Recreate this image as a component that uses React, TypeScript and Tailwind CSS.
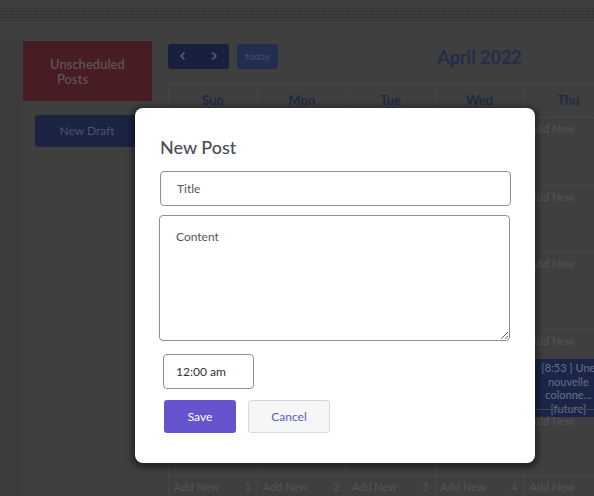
import React from "react";

const days = ["Sun", "Mon", "Tue", "Wed", "Thu", "Fri", "Sat"];
const rowHeights = [68, 67, 77, 80, 66, 60];
const bottomNums = ["1", "2", "3", "4", "5", "6", "7"];

function Cell({ num, children }: { num?: string; children?: React.ReactNode }) {
  return (
    <div className="border-r border-t border-[#464646] px-[5px] pt-[4px] h-full">
      <div className="flex justify-between text-[11px] leading-[14px] text-[#52555b]">
        <span>Add New</span>
        <span className="pr-[1px]">{num}</span>
      </div>
      {children}
    </div>
  );
}

export default function App() {
  return (
    <div
      className="relative w-[594px] h-[496px] overflow-hidden bg-[#3f3f3f]"
      style={{ fontFamily: "Lato, 'Noto Sans', sans-serif" }}
    >
      {/* top dotted band */}
      <div className="h-[7px]" />
      <div className="h-[14px] bg-[radial-gradient(#363636_1px,transparent_1.2px)] bg-[length:3px_3px]" />
      <div className="h-[20px]" />

      <div className="flex">
        {/* sidebar */}
        <div className="w-[23px] shrink-0 h-[460px] bg-[#3c3c3c]" />
        <div className="w-[129px] shrink-0">
          <div className="h-[60px] bg-[#481c23] pl-[27px] pt-[16px] text-[13px] leading-[15px] font-semibold text-[#5f5358]">
            <div>Unscheduled</div>
            <div className="pl-[7px]">Posts</div>
          </div>
          <div className="mt-[14px] ml-[12px] w-[104px] h-[32px] rounded-[3px] bg-[#1b2443] flex items-center justify-center text-[12px] text-[#4e5466]">
            New Draft
          </div>
        </div>

        {/* calendar */}
        <div className="ml-[16px] w-[623px] shrink-0">
          <div className="grid grid-cols-3 h-[25px] items-center">
            <div className="flex gap-[8px]">
              <div className="flex w-[61px] h-[25px] rounded-[3px] bg-[#17213d] text-[#5b6273]">
                <div className="flex-1 flex items-center justify-center">
                  <svg width="10" height="10" viewBox="0 0 10 10" fill="none" stroke="currentColor" strokeWidth="1.6">
                    <path d="M6.5 1.5 3 5l3.5 3.5" />
                  </svg>
                </div>
                <div className="flex-1 flex items-center justify-center">
                  <svg width="10" height="10" viewBox="0 0 10 10" fill="none" stroke="currentColor" strokeWidth="1.6">
                    <path d="M3.5 1.5 7 5 3.5 8.5" />
                  </svg>
                </div>
              </div>
              <div className="w-[41px] h-[25px] rounded-[3px] bg-[#222d52] flex items-center justify-center text-[10px] text-[#4b5168]">
                today
              </div>
            </div>
            <div className="text-center text-[18px] font-bold text-[#232c48] pt-[3px]">April 2022</div>
            <div />
          </div>

          <div className="mt-[17px] border-l border-[#464646]">
            <div className="grid grid-cols-7 h-[34px] border-b border-dotted border-[#474747]">
              {days.map((d) => (
                <div
                  key={d}
                  className="border-r border-t border-[#464646] flex items-center justify-center pt-[1px] text-[13px] font-bold text-[#1f2945]"
                >
                  {d}
                </div>
              ))}
            </div>
            {rowHeights.map((h, r) => (
              <div key={r} className="grid grid-cols-7" style={{ height: h }}>
                {days.map((d, c) => (
                  <Cell key={d} num={r === 5 ? bottomNums[c] : String(r * 7 + c + 3)}>
                    {r === 3 && c === 4 ? (
                      <div className="mt-[11px] mx-[-2px] bg-[#1b2548] py-[2px] text-center text-[11px] leading-[13.5px] text-[#6a7086]">
                        [8:53 ] Une
                        <br />
                        nouvelle
                        <br />
                        colonne...
                        <br />
                        [future]
                      </div>
                    ) : null}
                  </Cell>
                ))}
              </div>
            ))}
          </div>
        </div>
      </div>

      {/* modal */}
      <div className="absolute left-[135px] top-[108px] w-[400px] h-[355px] rounded-[8px] bg-white shadow-[0_2px_6px_3px_rgba(0,0,0,0.45)] pl-[25px] pt-[27px]">
        <h2 className="text-[18px] leading-[24px] font-medium text-[#4a4d55]">New Post</h2>
        <input
          className="mt-[12px] block w-[351px] h-[35px] rounded-[4px] border border-[#8c8f94] px-[16px] text-[12px] text-[#2c3338] placeholder:text-[#50575e] outline-none"
          placeholder="Title"
        />
        <textarea
          className="mt-[9px] -ml-px block w-[351px] h-[126px] rounded-[4px] border border-[#8c8f94] px-[16px] py-[12px] text-[12px] text-[#2c3338] placeholder:text-[#50575e] outline-none"
          placeholder="Content"
        />
        <input
          className="mt-[13px] ml-[3px] block w-[91px] h-[35px] rounded-[4px] border border-[#8c8f94] px-[12px] text-[12px] text-[#2c3338] outline-none"
          defaultValue="12:00 am"
        />
        <div className="mt-[11px] ml-[4px] flex gap-[12px]">
          <button className="w-[72px] h-[33px] rounded-[3px] bg-[#6654cf] text-[12px] text-white">Save</button>
          <button className="w-[82px] h-[33px] rounded-[3px] bg-[#f5f6f6] border border-[#d7d9db] text-[12px] text-[#6559c4]">
            Cancel
          </button>
        </div>
      </div>
    </div>
  );
}
